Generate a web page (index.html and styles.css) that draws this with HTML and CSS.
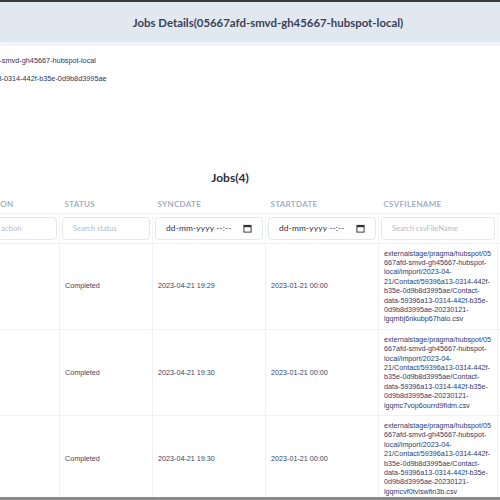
FILE: index.html
```html
<!DOCTYPE html>
<html lang="en">
<head>
<meta charset="utf-8">
<title>Jobs Details</title>
<link rel="stylesheet" href="styles.css">
</head>
<body>
<div class="topbar"></div>
<header class="title-bar">
  <h1 class="title">Jobs Details(05667afd-smvd-gh45667-hubspot-local)</h1>
</header>
<div class="title-underline"></div>
<section class="info">
  <div class="info-row"><span class="info-label">Connector</span><span class="info-value">05667afd-smvd-gh45667-hubspot-local</span></div>
  <div class="info-row"><span class="info-label">Job Id</span><span class="info-value">59396a13-0314-442f-b35e-0d9b8d3995ae</span></div>
</section>
<h2 class="jobs-title">Jobs(4)</h2>
<div class="table-wrap">
<table class="jobs">
  <colgroup>
    <col class="c-action"><col class="c-status"><col class="c-date"><col class="c-date"><col class="c-file"><col class="c-extra">
  </colgroup>
  <thead>
    <tr class="head-row">
      <th>Section</th><th>Status</th><th>SyncDate</th><th>StartDate</th><th>csvFileName</th><th>Records</th>
    </tr>
    <tr class="filter-row">
      <td><div class="field placeholder">Search action</div></td>
      <td><div class="field placeholder">Search status</div></td>
      <td><div class="field date">dd-mm-yyyy --:--<svg class="cal" viewBox="0 0 10 10" width="9" height="9"><rect x="1" y="1.5" width="8" height="7.5" fill="none" stroke="#2b2b2b" stroke-width="1"/><rect x="1" y="1.5" width="8" height="2" fill="#2b2b2b"/></svg></div></td>
      <td><div class="field date">dd-mm-yyyy --:--<svg class="cal" viewBox="0 0 10 10" width="9" height="9"><rect x="1" y="1.5" width="8" height="7.5" fill="none" stroke="#2b2b2b" stroke-width="1"/><rect x="1" y="1.5" width="8" height="2" fill="#2b2b2b"/></svg></div></td>
      <td><div class="field placeholder">Search csvFileName</div></td>
      <td><div class="field placeholder">Search records</div></td>
    </tr>
  </thead>
  <tbody>
    <tr>
      <td>import</td><td>Completed</td><td>2023-04-21 19:29</td><td>2023-01-21 00:00</td>
      <td class="file">externalstage/pragma/hubspot/05667afd-smvd-gh45667-hubspot-local/import/2023-04-21/Contact/59396a13-0314-442f-b35e-0d9b8d3995ae/Contact-data-59396a13-0314-442f-b35e-0d9b8d3995ae-20230121-lgqmbj6nkubp67halo.csv</td><td>120</td>
    </tr>
    <tr>
      <td>import</td><td>Completed</td><td>2023-04-21 19:30</td><td>2023-01-21 00:00</td>
      <td class="file">externalstage/pragma/hubspot/05667afd-smvd-gh45667-hubspot-local/import/2023-04-21/Contact/59396a13-0314-442f-b35e-0d9b8d3995ae/Contact-data-59396a13-0314-442f-b35e-0d9b8d3995ae-20230121-lgqmc7vop6ourrd9fldm.csv</td><td>120</td>
    </tr>
    <tr>
      <td>import</td><td>Completed</td><td>2023-04-21 19:30</td><td>2023-01-21 00:00</td>
      <td class="file">externalstage/pragma/hubspot/05667afd-smvd-gh45667-hubspot-local/import/2023-04-21/Contact/59396a13-0314-442f-b35e-0d9b8d3995ae/Contact-data-59396a13-0314-442f-b35e-0d9b8d3995ae-20230121-lgqmcvf0tviswfin3b.csv</td><td>120</td>
    </tr>
  </tbody>
</table>
</div>
<div class="scrollbar"></div>
</body>
</html>
```

FILE: styles.css
```css
* { box-sizing: border-box; }
html, body { margin: 0; padding: 0; }
body {
  width: 500px;
  height: 500px;
  overflow: hidden;
  background: #ffffff;
  font-family: "Lato", "Inter", "DejaVu Sans", sans-serif;
  color: #33375e;
}
.topbar { height: 2px; background: #3a3a3a; }
.title-bar {
  height: 40px;
  background: #e2e8f0;
  display: flex;
  align-items: center;
  justify-content: center;
  padding-left: 36px;
}
.title {
  margin: 0;
  font-size: 11.4px;
  font-weight: 700;
  color: #3a4257;
  white-space: nowrap;
}
.title-underline { height: 4px; background: #f1f5fb; }
.info {
  margin-left: -121px;
  padding-top: 10px;
  display: flex;
  flex-direction: column;
  gap: 8px;
  font-family: "Liberation Sans", Arial, sans-serif;
  font-size: 7.3px;
  line-height: 10px;
  color: #2f3560;
}
.info-row { display: flex; white-space: nowrap; }
.info-label { width: 90px; }
.jobs-title {
  margin: 86px 0 0;
  padding-right: 40px;
  text-align: center;
  font-size: 12px;
  line-height: 15px;
  font-weight: 700;
  color: #2c2f3a;
}
.table-wrap { margin-top: 10px; margin-left: -37px; }
.jobs {
  border-collapse: collapse;
  table-layout: fixed;
  width: 634px;
}
.c-action { width: 96px; }
.c-status { width: 93px; }
.c-date { width: 113px; }
.c-file { width: 119px; }
.c-extra { width: 100px; }
.head-row th {
  height: 18px;
  padding: 0 5px;
  text-align: left;
  font-size: 8px;
  font-weight: 700;
  letter-spacing: 0.3px;
  text-transform: uppercase;
  color: #a3aec0;
  border-bottom: 1px solid #eef1f6;
  vertical-align: middle;
}
.head-row th:first-child { text-align: right; padding-right: 46px; }
.filter-row td {
  padding: 3px 2px;
  border-left: 1px solid #f4f5f9;
}
.field {
  height: 23px;
  border: 1px solid #e3e8f0;
  border-radius: 4px;
  padding: 0 10px;
  display: flex;
  align-items: center;
  justify-content: space-between;
  font-size: 7.5px;
  white-space: nowrap;
}
.placeholder { color: #b3bccb; }
.date { color: #2f2f3a; font-size: 8.4px; letter-spacing: 0.15px; }
.cal { flex: none; }
tbody td {
  padding: 5px;
  font-family: "Liberation Sans", Arial, sans-serif;
  font-size: 7.2px;
  line-height: 9.4px;
  color: #3d3f62;
  vertical-align: middle;
  border: 1px solid #eff1f7;
}
.file { overflow-wrap: anywhere; color: #33386a; }
.scrollbar {
  position: fixed;
  left: 0;
  right: 0;
  bottom: 0;
  height: 3px;
  background: #8a8a8a;
}
```
